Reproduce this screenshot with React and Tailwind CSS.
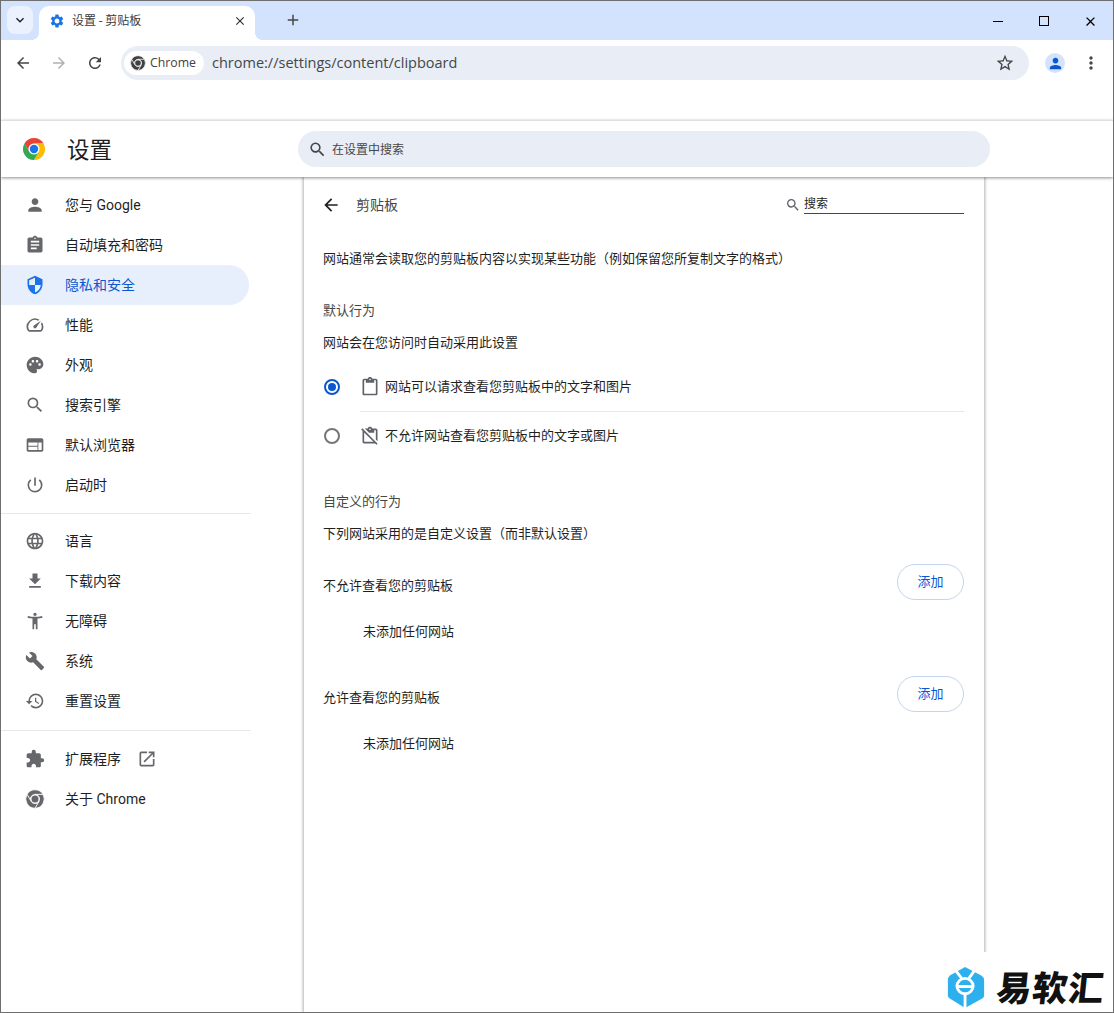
import {
  MdAccessibilityNew,
  MdAdd,
  MdArrowBack,
  MdArrowForward,
  MdAssignment,
  MdBuild,
  MdClose,
  MdContentPaste,
  MdContentPasteOff,
  MdExpandMore,
  MdExtension,
  MdFileDownload,
  MdHistory,
  MdLanguage,
  MdMoreVert,
  MdOpenInNew,
  MdOutlineSpeed,
  MdPalette,
  MdPerson,
  MdPowerSettingsNew,
  MdRefresh,
  MdSearch,
  MdSecurity,
  MdSettings,
  MdStarBorder,
  MdWeb,
} from "react-icons/md";

const font = "font-['Roboto','Noto_Sans_CJK_SC',sans-serif]";

function ChromeLogo({ size = 24, mono }) {
  const seam = mono ? { stroke: "#fff", strokeWidth: 0.9 } : {};
  return (
    <svg width={size} height={size} viewBox="0 0 24 24">
      <path d="M2.47 6.5A11 11 0 0 1 21.53 6.5H12A5.5 5.5 0 0 0 7.24 14.75Z" fill={mono || "#ea4335"} {...seam} />
      <path d="M21.53 6.5A11 11 0 0 1 12 23L16.76 14.75A5.5 5.5 0 0 0 12 6.5Z" fill={mono || "#fbbc04"} {...seam} />
      <path d="M12 23A11 11 0 0 1 2.47 6.5L7.24 14.75A5.5 5.5 0 0 0 16.76 14.75Z" fill={mono || "#34a853"} {...seam} />
      <circle cx="12" cy="12" r="4.2" fill={mono || "#1a73e8"} />
    </svg>
  );
}

function NavItem({ icon: Icon, label, active, extra }) {
  return (
    <div
      className={`flex h-10 w-[248px] items-center rounded-r-full pl-6 text-sm ${
        active ? "bg-[#e7effc] text-[#0b57d0]" : "text-[#1f1f1f]"
      }`}
    >
      <span className={`flex w-10 shrink-0 ${active ? "text-[#1a73e8]" : "text-[#66676b]"}`}>
        {Icon}
      </span>
      <span>{label}</span>
      {extra}
    </div>
  );
}

function Sidebar() {
  return (
    <aside className="w-[303px] shrink-0 pt-[8px]">
      <NavItem icon={<MdPerson size={20} />} label="您与 Google" />
      <NavItem icon={<MdAssignment size={20} />} label="自动填充和密码" />
      <NavItem icon={<MdSecurity size={20} />} label="隐私和安全" active />
      <NavItem icon={<MdOutlineSpeed size={20} />} label="性能" />
      <NavItem icon={<MdPalette size={20} />} label="外观" />
      <NavItem icon={<MdSearch size={20} />} label="搜索引擎" />
      <NavItem icon={<MdWeb size={20} />} label="默认浏览器" />
      <NavItem icon={<MdPowerSettingsNew size={20} />} label="启动时" />
      <div className="mt-2 mb-[7px] h-px w-[250px] bg-[#e8e8e8]" />
      <NavItem icon={<MdLanguage size={20} />} label="语言" />
      <NavItem icon={<MdFileDownload size={20} />} label="下载内容" />
      <NavItem icon={<MdAccessibilityNew size={20} />} label="无障碍" />
      <NavItem icon={<MdBuild size={20} />} label="系统" />
      <NavItem icon={<MdHistory size={20} />} label="重置设置" />
      <div className="mt-[9px] mb-2 h-px w-[250px] bg-[#e8e8e8]" />
      <NavItem
        icon={<MdExtension size={20} />}
        label="扩展程序"
        extra={<MdOpenInNew size={20} className="ml-[16px] text-[#66676b]" />}
      />
      <NavItem icon={<ChromeLogo size={20} mono="#66676b" />} label="关于 Chrome" />
    </aside>
  );
}

function RadioRow({ checked, icon: Icon, label }) {
  return (
    <div className="flex h-12 items-center">
      <span
        className={`ml-px flex h-4 w-4 shrink-0 items-center justify-center rounded-full border-2 ${
          checked ? "border-[#0b57d0]" : "border-[#747775]"
        }`}
      >
        {checked && <span className="h-2 w-2 rounded-full bg-[#0b57d0]" />}
      </span>
      <Icon size={20} className="ml-[20px] shrink-0 text-[#5f6368]" />
      <span className="ml-[5px] text-[13px] text-[#1f1f1f]">{label}</span>
    </div>
  );
}

function SiteList({ title }) {
  return (
    <div className="h-[112px]">
      <div className="flex h-9 items-start justify-between">
        <span className="mt-[12px] text-[13px] leading-5">{title}</span>
        <button
          type="button"
          className="h-9 w-[67px] rounded-full border border-[#c4d4ee] bg-white text-[13px] text-[#0b57d0]"
        >
          添加
        </button>
      </div>
      <div className="mt-4 flex h-8 items-center pl-10 text-[13px]">未添加任何网站</div>
    </div>
  );
}

function ClipboardPage() {
  return (
    <main className="w-[680px] shrink-0 bg-white pt-px pr-5 pl-[19px] text-[#1f1f1f] shadow-[0_0_3px_1px_rgba(0,0,0,0.3)]">
      <div className="flex h-[54px] items-center">
        <MdArrowBack size={20} className="-ml-[2px] text-[#1f1f1f]" />
        <span className="ml-[15px] text-sm text-[#444746]">剪贴板</span>
        <MdSearch size={16} className="ml-auto text-[#5f6368]" />
        <span className="ml-[3px] w-40 border-b border-[#474747] text-xs leading-[17px]">搜索</span>
      </div>
      <div className="flex h-[54px] items-center text-[13px]">
        网站通常会读取您的剪贴板内容以实现某些功能（例如保留您所复制文字的格式）
      </div>
      <div className="mt-[9px] flex h-8 items-center text-[13px] text-[#444746]">默认行为</div>
      <div className="flex h-8 items-center text-[13px]">网站会在您访问时自动采用此设置</div>
      <div className="mt-1">
        <RadioRow checked icon={MdContentPaste} label="网站可以请求查看您剪贴板中的文字和图片" />
        <div className="ml-[37px] h-px bg-[#e8e8e8]" />
        <RadioRow icon={MdContentPasteOff} label="不允许网站查看您剪贴板中的文字或图片" />
      </div>
      <div className="mt-[26px] flex h-8 items-center text-[13px] text-[#444746]">自定义的行为</div>
      <div className="flex h-8 items-center text-[13px]">下列网站采用的是自定义设置（而非默认设置）</div>
      <div className="mt-[14px]">
        <SiteList title="不允许查看您的剪贴板" />
        <SiteList title="允许查看您的剪贴板" />
      </div>
    </main>
  );
}

function TabStrip() {
  return (
    <div className="flex h-[39px] items-end bg-[#d3e3fd] pl-[6px]">
      <div className="mb-[6px] flex h-7 w-[26px] items-center justify-center rounded-lg bg-[#ecf2fd] text-[#1f1f1f]">
        <MdExpandMore size={16} />
      </div>
      <div className="relative ml-[6px] flex h-[34px] w-[216px] items-center rounded-t-[10px] bg-white pb-[4px] pl-[10px] pr-[8px]">
        <span className="absolute -left-[8px] bottom-0 h-2 w-2 bg-[radial-gradient(circle_at_0_0,#d3e3fd_8px,#fff_8px)]" />
        <span className="absolute -right-[8px] bottom-0 h-2 w-2 bg-[radial-gradient(circle_at_100%_0,#d3e3fd_8px,#fff_8px)]" />
        <MdSettings size={16} className="text-[#1a73e8]" />
        <span className="ml-[7px] text-xs text-[#3c3c3c]">设置 - 剪贴板</span>
        <MdClose size={14} className="ml-auto text-[#303030]" />
      </div>
      <MdAdd size={18} className="mb-[11px] ml-[29px] text-[#444746]" />
      <div className="mb-[11px] ml-auto flex items-center">
        <div className="flex h-4 w-[46px] items-center justify-center">
          <span className="h-px w-[10px] bg-black" />
        </div>
        <div className="flex h-4 w-[46px] items-center justify-center">
          <span className="h-[10px] w-[10px] border border-black" />
        </div>
        <div className="flex h-4 w-[46px] items-center justify-center">
          <MdClose size={15} className="text-black" />
        </div>
      </div>
    </div>
  );
}

function Toolbar() {
  return (
    <div className="flex h-[48px] items-start rounded-t-lg bg-white pt-[6px]">
      <div className="flex h-[34px] w-[120px] shrink-0 items-center text-[#444746]">
        <MdArrowBack size={18} className="ml-[13px]" />
        <MdArrowForward size={18} className="ml-[18px] text-[#b0b1b3]" />
        <MdRefresh size={18} className="ml-[18px]" />
      </div>
      <div className="flex h-[34px] w-[908px] items-center rounded-full bg-[#e9edf6] pl-[3px] pr-[14px]">
        <div className="flex h-6 w-20 items-center rounded-full bg-white pl-[6px] text-[#3f4143]">
          <ChromeLogo size={16} mono="#3f4143" />
          <span className="ml-[4px] font-['Open_Sans',sans-serif] text-[12.3px]">Chrome</span>
        </div>
        <span className="ml-2 font-['Open_Sans',sans-serif] text-[14.5px] text-[#444746]">
          chrome://settings/content/clipboard
        </span>
        <MdStarBorder size={20} className="ml-auto text-[#444746]" />
      </div>
      <div className="ml-4 flex h-[34px] items-center">
        <span className="flex h-5 w-5 items-center justify-center rounded-full bg-[#d3e3fd]">
          <MdPerson size={17} className="text-[#0b57d0]" />
        </span>
        <MdMoreVert size={20} className="ml-[16px] text-[#444746]" />
      </div>
    </div>
  );
}

function SettingsHeader() {
  return (
    <header className="relative z-10 flex h-[57px] items-center border-t border-[#e0e0e0] bg-white shadow-[0_1px_3px_rgba(0,0,0,0.45)]">
      <span className="ml-[21px]">
        <ChromeLogo size={24} />
      </span>
      <span className="ml-[21px] pt-[3px] text-[22.5px] text-[#1f1f1f]">设置</span>
      <div className="ml-[186px] flex h-9 w-[692px] items-center rounded-full bg-[#e9edf6] pl-[10px]">
        <MdSearch size={19} className="text-[#444746]" />
        <span className="ml-[5px] pt-[2px] text-xs text-[#474747]">在设置中搜索</span>
      </div>
    </header>
  );
}

function Watermark() {
  return (
    <div className="absolute bottom-0 right-0 flex h-[60px] w-[169px] items-start bg-white pl-[3px] pt-[15px]">
      <svg width="38" height="41" viewBox="0 0 38 43">
        <path d="M18 0 35 9Q38 11 38 14V30Q38 32 36 33L18 43 2 33Q0 32 0 30V14Q0 11 2 9Z" fill="#2fb0ee" />
        <path d="M6 1 14.5 12M30 1 22 12" fill="none" stroke="#fff" strokeWidth="3" />
        <ellipse cx="18" cy="20" rx="8.5" ry="8" fill="none" stroke="#fff" strokeWidth="3" />
        <path d="M10 20.5H26M18 28V43" fill="none" stroke="#fff" strokeWidth="3" />
      </svg>
      <span className="-mt-[2px] ml-[12px] -skew-x-6 font-['Noto_Sans_CJK_SC',sans-serif] text-[35px] font-black leading-[41px] tracking-[1px] text-[#111]">
        易软汇
      </span>
    </div>
  );
}

export default function App() {
  return (
    <div className={`relative h-[1013px] w-[1114px] overflow-hidden border border-[#6f6f6f] bg-white ${font}`}>
      <TabStrip />
      <Toolbar />
      <div className="h-8 bg-white" />
      <SettingsHeader />
      <div className="flex h-[835px]">
        <Sidebar />
        <ClipboardPage />
      </div>
      <Watermark />
    </div>
  );
}
